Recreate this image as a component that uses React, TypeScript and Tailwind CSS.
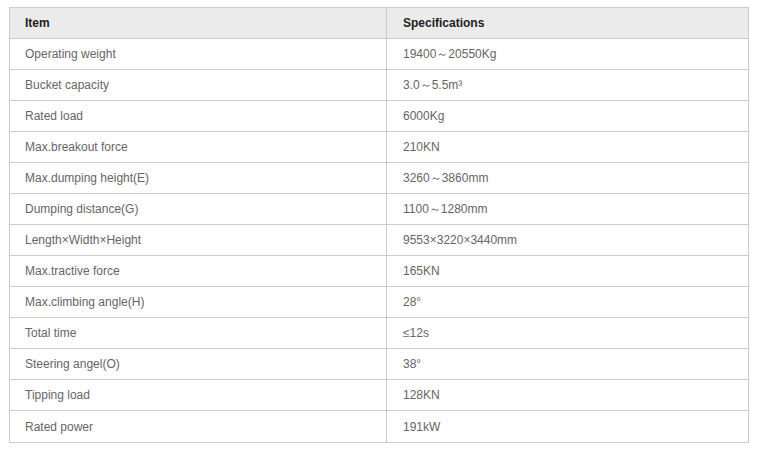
import React from 'react'

const rows: [string, string][] = [
  ['Operating weight', '19400～20550Kg'],
  ['Bucket capacity', '3.0～5.5m³'],
  ['Rated load', '6000Kg'],
  ['Max.breakout force', '210KN'],
  ['Max.dumping height(E)', '3260～3860mm'],
  ['Dumping distance(G)', '1100～1280mm'],
  ['Length×Width×Height', '9553×3220×3440mm'],
  ['Max.tractive force', '165KN'],
  ['Max.climbing angle(H)', '28°'],
  ['Total time', '≤12s'],
  ['Steering angel(O)', '38°'],
  ['Tipping load', '128KN'],
  ['Rated power', '191kW'],
]

export default function App() {
  return (
    <div className="w-[758px] h-[449px] bg-white pt-[7px] pl-[9px] font-['Liberation_Sans',Arial,sans-serif] text-[12px]">
      <div className="w-[740px] border border-[#cccccc]">
        <div className="flex h-[31px] bg-[#ebebeb] border-b border-[#cccccc] font-bold text-[#222]">
          <div className="w-[377px] border-r border-[#cccccc] flex items-center pl-[15px]">Item</div>
          <div className="flex-1 flex items-center pl-[16px]">Specifications</div>
        </div>
        {rows.map(([k, v], i) => (
          <div
            key={k}
            className={`flex h-[31px] text-[#666] ${i < rows.length - 1 ? 'border-b border-[#cccccc]' : 'h-[30px]'}`}
          >
            <div className="w-[377px] border-r border-[#cccccc] flex items-center pl-[15px]">{k}</div>
            <div className="flex-1 flex items-center pl-[16px]">{v}</div>
          </div>
        ))}
      </div>
    </div>
  )
}
